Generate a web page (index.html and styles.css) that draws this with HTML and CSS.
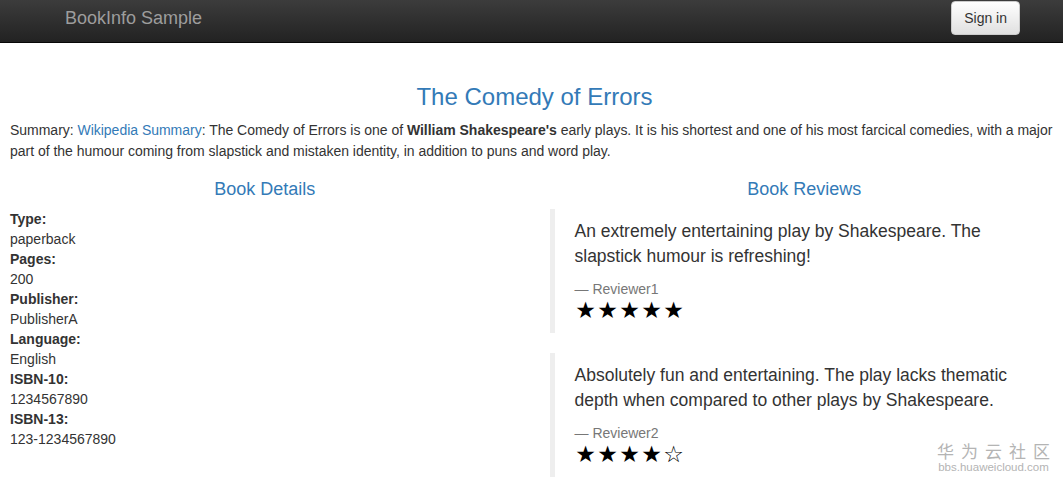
FILE: index.html
```html
<!DOCTYPE html>
<html lang="en">
<head>
<meta charset="utf-8">
<title>Simple Bookstore App</title>
<link rel="stylesheet" href="styles.css">
</head>
<body>
<nav class="navbar">
  <a class="brand" href="#">BookInfo Sample</a>
  <button class="signin" type="button">Sign in</button>
</nav>
<main class="page">
  <h3 class="title">The Comedy of Errors</h3>
  <p class="summary">Summary: <a href="#">Wikipedia Summary</a>: The Comedy of Errors is one of <b>William Shakespeare's</b> early plays. It is his shortest and one of his most farcical comedies, with a major part of the humour coming from slapstick and mistaken identity, in addition to puns and word play.</p>
  <div class="row">
    <section class="col">
      <h4 class="col-title">Book Details</h4>
      <dl class="details">
        <dt>Type:</dt><dd>paperback</dd>
        <dt>Pages:</dt><dd>200</dd>
        <dt>Publisher:</dt><dd>PublisherA</dd>
        <dt>Language:</dt><dd>English</dd>
        <dt>ISBN-10:</dt><dd>1234567890</dd>
        <dt>ISBN-13:</dt><dd>123-1234567890</dd>
      </dl>
    </section>
    <section class="col">
      <h4 class="col-title">Book Reviews</h4>
      <blockquote class="review">
        <p>An extremely entertaining play by Shakespeare. The slapstick humour is refreshing!</p>
        <footer>— Reviewer1</footer>
        <div class="stars"><span>★</span><span>★</span><span>★</span><span>★</span><span>★</span></div>
      </blockquote>
      <blockquote class="review">
        <p>Absolutely fun and entertaining. The play lacks thematic depth when compared to other plays by Shakespeare.</p>
        <footer>— Reviewer2</footer>
        <div class="stars"><span>★</span><span>★</span><span>★</span><span>★</span><span class="empty">☆</span></div>
      </blockquote>
    </section>
  </div>
</main>
<div class="watermark">
  <div class="wm-cn">华为云社区</div>
  <div class="wm-url">bbs.huaweicloud.com</div>
</div>
</body>
</html>
```
FILE: styles.css
```css
html, body {
  margin: 0;
  padding: 0;
}
body {
  width: 1063px;
  height: 484px;
  overflow: hidden;
  position: relative;
  background: #fff;
  font-family: "Liberation Sans", Arial, sans-serif;
  font-size: 14px;
  line-height: 20px;
  color: #333;
}
a {
  color: #337ab7;
  text-decoration: none;
}
.navbar {
  height: 43px;
  box-sizing: border-box;
  background: linear-gradient(to bottom, #3c3c3c 0%, #222 100%);
  border-bottom: 1px solid #080808;
  display: flex;
  align-items: flex-start;
  justify-content: space-between;
  padding: 0 43px 0 65px;
}
.brand {
  color: #9d9d9d;
  font-size: 18px;
  line-height: 20px;
  padding-top: 8px;
}
.signin {
  margin-top: 1px;
  height: 34px;
  padding: 0 12px;
  font-family: "Liberation Sans", Arial, sans-serif;
  font-size: 14px;
  color: #333;
  background: linear-gradient(to bottom, #fff 0%, #e0e0e0 100%);
  border: 1px solid #ccc;
  border-radius: 4px;
}
.page {
  padding: 0 4px 0 10px;
}
.title {
  margin: 41px 0 0;
  text-align: center;
  font-size: 24px;
  line-height: 26px;
  font-weight: normal;
  color: #337ab7;
}
.summary {
  margin: 10px -2px 0 0;
  line-height: 21px;
  letter-spacing: -0.02px;
}
.row {
  display: flex;
  gap: 30px;
  margin-top: 17px;
}
.col {
  flex: 1;
  min-width: 0;
}
.col-title {
  margin: 0 0 10px;
  text-align: center;
  font-size: 18px;
  line-height: 20px;
  font-weight: normal;
  color: #337ab7;
}
.details {
  margin: 0;
}
.details dt {
  font-weight: bold;
}
.details dd {
  margin: 0;
}
.review {
  margin: 0 0 20px;
  padding: 10px 20px;
  border-left: 5px solid #eee;
  font-size: 17.5px;
  line-height: 25px;
}
.review p {
  margin: 0 0 10px;
}
.review footer {
  font-size: 14px;
  line-height: 20px;
  color: #777;
}
.stars {
  display: flex;
  font-family: "DejaVu Sans", sans-serif;
  font-size: 23px;
  line-height: 22px;
  height: 24px;
  color: #000;
}
.stars span {
  width: 22px;
  text-align: center;
}
.watermark {
  position: absolute;
  right: 13px;
  bottom: 10px;
  text-align: center;
  color: #b4b4b4;
}
.wm-cn {
  font-family: "Noto Sans CJK SC", sans-serif;
  font-size: 17px;
  line-height: 20px;
  letter-spacing: 7px;
  margin-right: -7px;
}
.wm-url {
  font-size: 11.5px;
  line-height: 13px;
}
```
